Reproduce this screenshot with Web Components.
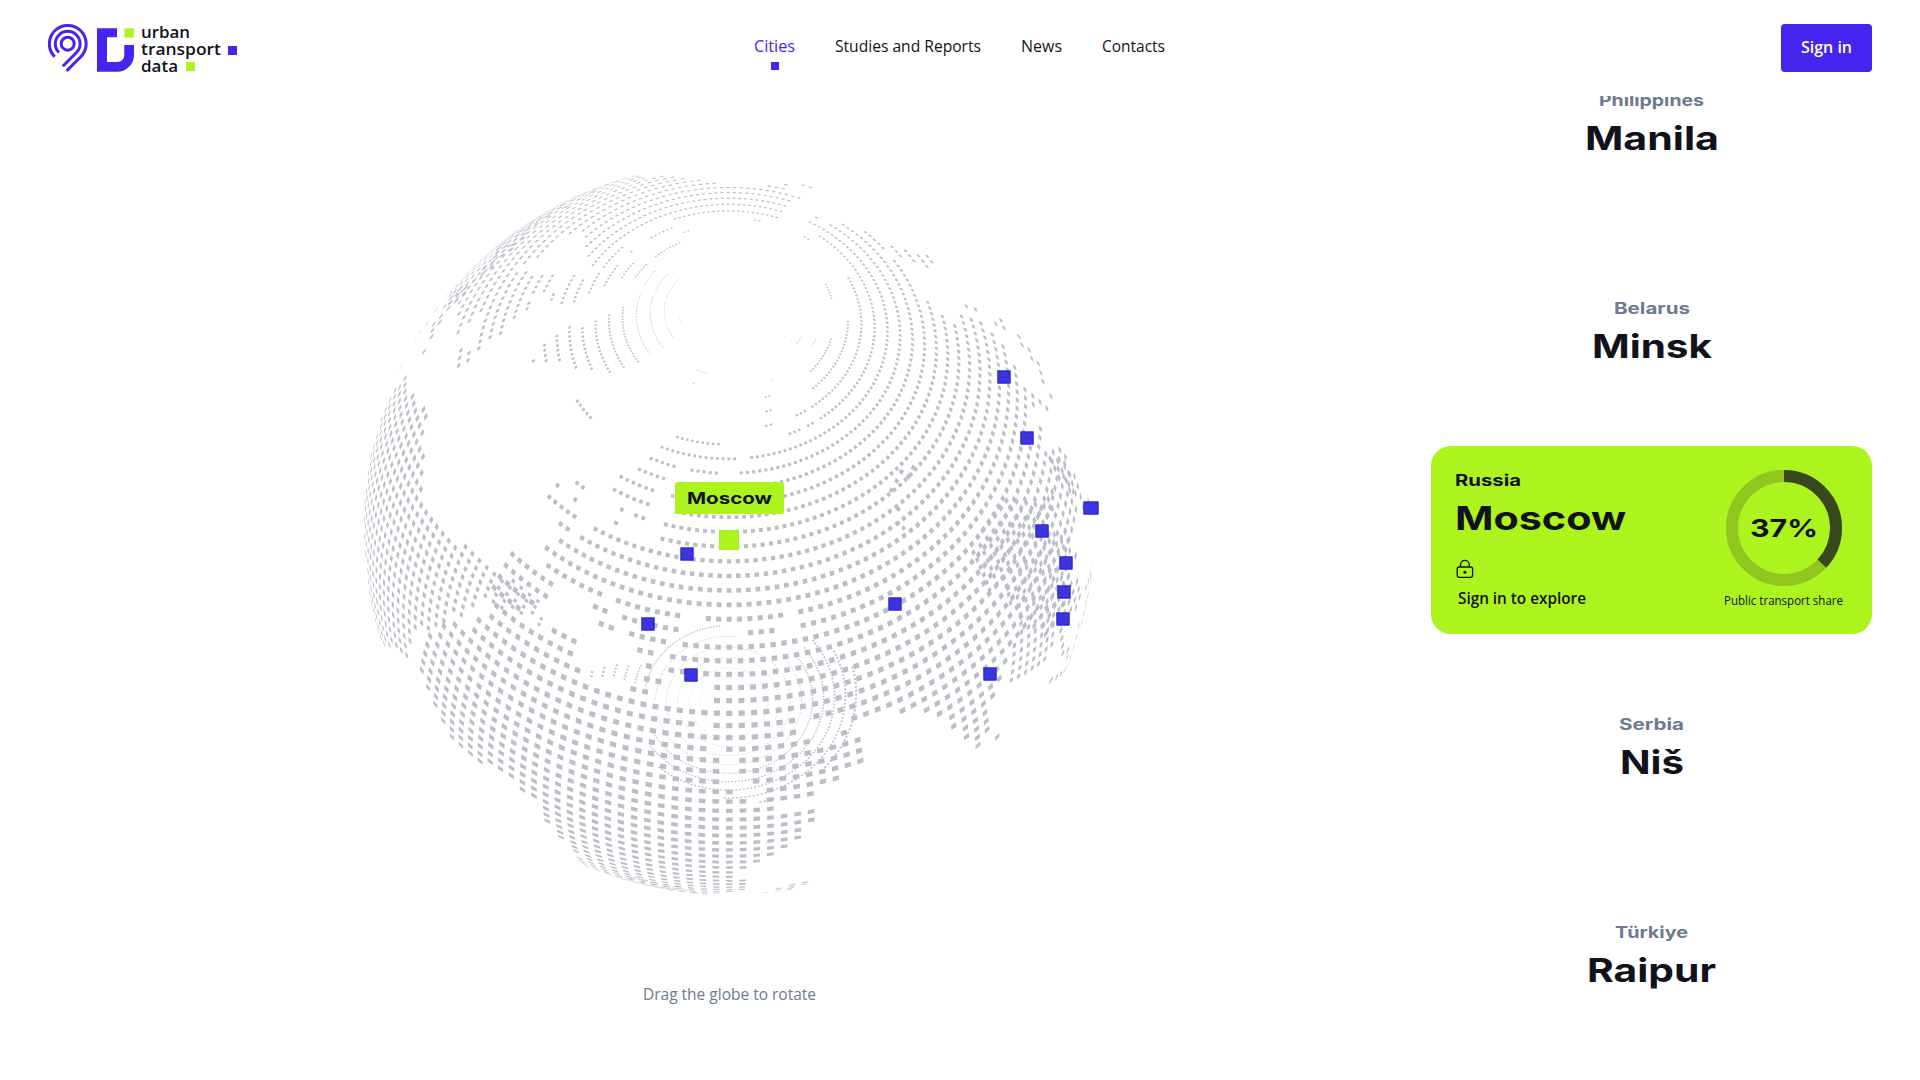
<!DOCTYPE html>
<html lang="en">
<head>
<meta charset="utf-8">
<title>Urban Transport Data</title>
<style>
html,body{margin:0;height:100%;background:#fff;overflow:hidden}
body{font-family:"Open Sans","Noto Sans",sans-serif;color:#12121c}
</style>
</head>
<body>
<utd-app></utd-app>
<script>
const define = (name, html, setup) => {
  const tpl = document.createElement('template');
  tpl.innerHTML = html;
  customElements.define(name, class extends HTMLElement {
    connectedCallback() {
      if (this.shadowRoot) return;
      this.attachShadow({mode: 'open'}).append(tpl.content.cloneNode(true));
      if (setup) setup.call(this, this.shadowRoot);
    }
  });
};

/* One line of text stretched to a set width. */
define('fit-text', `<style>
:host{display:inline-block;white-space:nowrap;text-align:left}
span{display:inline-block;transform-origin:0 50%}
:host([wide]){font-family:Inter,"Liberation Sans",sans-serif;font-weight:650}
</style><span></span>`, function (root) {
  const s = root.querySelector('span');
  s.textContent = this.getAttribute('text');
  const w = +this.getAttribute('w');
  const natural = s.getBoundingClientRect().width;
  this.style.width = w + 'px';
  s.style.transform = 'scaleX(' + (w / natural) + ')';
});

define('utd-logo', `<style>
:host{display:flex;align-items:flex-start;height:48px;width:190px}
svg{width:94px;height:50px;flex:none;display:block}
.words{display:flex;flex-direction:column;font-size:17px;font-weight:600;line-height:17px;margin:-1px 0 0 -1px}
.row{display:flex;height:17px;align-items:flex-start}
i{width:9px;height:9px;flex:none}
</style>
<svg viewBox="0 0 94 50">
<g fill="none" stroke="#4524f0" stroke-width="3">
<circle cx="19.7" cy="19.7" r="6.5"/>
<path d="M10.9 28.5A12.4 12.4 0 1 1 28.5 28.5L14.8 42.2"/>
<path d="M6.7 32.8A18.4 18.4 0 1 1 32.8 32.8L18.7 46.9"/></g>
<path fill="#4524f0" d="M49 4.3H69V13.3H59V38H69.3A7 7 0 0 0 76.3 31V21H86V31A16.7 16.7 0 0 1 69.3 47.7H49Z"/>
<path fill="#adf41f" d="M76.4 4.3H85.8V13.6H76.4Z"/>
</svg>
<div class="words">
<div class="row"><fit-text text="urban" w="49"></fit-text></div>
<div class="row"><fit-text text="transport" w="80"></fit-text><i style="background:#4524f0;margin:6px 0 0 6.5px"></i></div>
<div class="row"><fit-text text="data" w="37"></fit-text><i style="background:#adf41f;margin:5px 0 0 8px"></i></div>
</div>`);

define('nav-item', `<style>
:host{display:flex;flex-direction:column;align-items:center;font-size:16px;line-height:24px;height:36px}
i{width:8px;height:8px;margin-top:4px;background:transparent}
:host([active]){color:#4524f0}
:host([active]) i{background:#4524f0}
</style><slot></slot><i></i>`);

define('sign-button', `<style>
:host{display:flex;align-items:flex-start;justify-content:center;box-sizing:border-box;width:91px;height:48px;padding-top:12px;border-radius:4px;background:#4524f0;color:#fff;font-size:16px;line-height:22px;font-weight:600}
</style><slot></slot>`);

define('utd-header', `<style>
:host{display:flex;justify-content:space-between;align-items:flex-start;box-sizing:border-box;height:96px;padding:24px 48px 0;background:#fff}
.left,.right{flex:1;display:flex}.right{justify-content:flex-end}
nav{display:flex;gap:40px;padding:10px 1px 0 0}
</style>
<div class="left"><utd-logo></utd-logo></div>
<nav>
<nav-item active><fit-text text="Cities" w="41"></fit-text></nav-item>
<nav-item><fit-text text="Studies and Reports" w="146"></fit-text></nav-item>
<nav-item><fit-text text="News" w="41"></fit-text></nav-item>
<nav-item><fit-text text="Contacts" w="63"></fit-text></nav-item>
</nav>
<div class="right"><sign-button><fit-text text="Sign in" w="51"></fit-text></sign-button></div>`);

/* Coastlines as flat lon,lat lists. */
const LAND = `
-17,15 -16.5,19.5 -17,21 -16,23.5 -13,27.5 -10,29 -9.8,31.5 -7,33.5 -6,35.8 -2,35 3,36.9 10,37.3 11,36.8 10.2,34.3 15,32.3 19.3,30.9 20,33.2 24,33.2 25,31.6 29,31.2 32.3,31.2 34.2,31.3 33,28.5 35.5,24 37.2,21 37.2,19 39.5,15.5 43,12.5 43.2,11.5 51.2,11.8 50.8,9.5 48,4.5 43.5,0.5 41.5,-2 39,-5 39.5,-7.5 40.6,-10.5 40.7,-15 37,-17.7 35,-20 35.5,-24 32.7,-26 32.4,-28.8 28,-33 25.6,-34 20,-34.8 18.3,-34 18.2,-31.8 15.2,-27 14.5,-22.5 11.8,-17.5 13.7,-11 12.2,-6 9,-1 9.7,3.8 8.5,4.5 6,4.3 4.4,6.3 1,5.9 -2,4.8 -7.5,4.4 -11.5,7 -13.3,9.2 -15,11 -16.7,12.4 -17.5,14.7
44,-17 47,-15.2 49.3,-12 50.3,-15.8 47.5,-24.8 45,-25.5 43.3,-22.5
22,34.5 26,34.5 26,35.5 22,35.5
-9,37 -9.5,38.8 -8.8,41 -9.2,43.2 -1.8,43.4 -1.2,46 -4.6,48.3 -1.5,48.7 -1.5,49.7 0.2,49.7 1.6,50.9 4,52 5,53.3 8.2,53.8 8.1,57 10.6,57.7 10.5,56 9.8,54.8 11,54 14,54 16,54.4 19,54.4 21,55.3 21.2,57.5 24.3,57.3 23.5,59 28,59.6 30,60 28,60.6 22.9,59.9 21.3,61 21.4,62.8 25.3,65 22.2,65.8 21,64.5 17.5,62 17.2,60.7 18.8,60 16.5,58.5 16,56.3 14.2,55.5 12.9,55.5 11,59 9,58.3 7,58 5.3,59 5,61.8 9,63.5 12,65.5 14.5,68 19,69.8 25,71 31,70.2 30,69.5 33,69.3 41,67.5 40,66.3 34,66.7 33,66.5 35,64.3 37.5,63.9 40,64.7 40.3,65.8 44,66 44,68.3 46.5,68 46,66.9 53,68.6 60,68.7 61,69.8 65,69.2 68.5,68.4 66.8,70.8 68.3,72.6 72.5,73 72,71 73,68 74.5,68.5 73.8,71 75,72.5 80.5,72.5 80.5,73.5 87,75 95,76 104,77.7 113,76 113.5,73.7 119,73 127,73.4 129,71 133,71.6 140,72.6 150,71.5 160,69.7 170,69.8 176,69.8 180,68.9 190,66.2 186,64.5 182,65.5 178.5,62.5 170,60 166,60 163,58 162.5,56 160,53 156.8,51 155.7,55 156,57.5 163,61.5 164,62.5 160,61.5 155,59.4 148,59.4 142,59 135.5,54.7 139,54 141.3,53 140.3,48.5 135.5,44 131,42.8 127.6,39.8 129.4,37 129.2,35.3 126.4,34.5 126.8,37 125,38.5 124.5,39.8 121.3,38.9 121.5,40.7 118,39 119,37.3 122.3,37.2 120,36 119.5,34.7 121.8,31.5 121.8,29 119.5,25.5 116.8,23.2 113,22 110,21.3 108.5,21.7 105.8,19.5 108.8,15.5 109.2,12 107,10.4 104.8,8.7 105,10.3 102.5,12.2 100.9,12.8 99.3,10 100.5,7.2 103,5.3 103.8,1.4 101.3,2.8 100.3,6 98.3,8.2 98.7,11.7 97.6,16.5 95.3,15.8 94.3,18.5 91.8,22.4 88.5,21.7 86.8,20.3 82.3,16.6 80.2,15 80.2,12 79.8,10.3 77.6,8.1 76.3,10 74.8,13.5 73,17 72.8,21 70.3,20.8 69,22.3 67,24.8 61.5,25.2 57.3,25.8 56.5,27 51.5,27.8 50,30.1 48,30 48.5,28 50.2,26.5 51.5,25.8 51.5,24.2 54.2,24.2 56.3,26 57,24 59.8,22.5 57.8,19 55.2,17.5 52,15.6 45,12.8 43.3,12.7 42.7,16.5 39.2,21 37,25 34.8,28 35,29.5 34.2,31.3 35,33 36,36.7 32.5,36.1 30.6,36.8 27.5,36.8 26.3,39 27,40.5 29,41.1 31.5,41.3 35,42 38,41 41.5,41.5 39,44 37.2,45.3 39.2,47 35,46.3 36.5,45.2 33.7,44.4 32.6,45.5 33,46.2 30.8,46.5 28.8,44.8 27.7,42.5 28.8,41.2 26.2,40.8 25,40.3 25,38 23.5,36.5 21.3,38 19.5,40.3 19.4,42 15.5,43.8 13.8,45 12.3,45.4 12.5,44 16,41.6 18.4,40 16.8,40.5 16.5,38.5 15.7,38 16,39.5 12.3,41.7 10.3,43.7 8.5,44.4 4.8,43.4 3.1,43 3.1,41.8 -0.2,39.5 0.1,38.7 -2.2,36.7 -5.6,36.1 -6.4,36.9
-5.5,50 1.3,51.3 1.7,52.7 0,53.5 -1.6,55.5 -2,57.6 -5,58.6 -5.5,56 -3,54.5 -4.5,53 -5,51.7 -3,51.4
-10,51.7 -6.3,52.2 -6,54.5 -8,55.3 -10,54
-22.5,64 -18.5,63.4 -14,64.8 -16,66.5 -20,65.5 -22.5,66.3
11,79.5 16,76.7 18,78 27,80.2 20,80.6
52,71 57,70.7 60,75 68.5,76.8 66,77.2 55,74.5
92,80 100,78 106,78.6 98,81.4
138,74 150,74.6 150,76 138,76
178,70.6 183,70.8 183,71.7 178,71.7
-44,60 -51,64 -54,67.5 -51,70 -55,72 -60,76 -71,77.3 -66,80 -60,82 -35,83.5 -20,82 -18,79 -20,75 -23,71.5 -30,68.2 -38,65.7
130,31.5 131,34.3 136,35.8 140,40 141.5,41.3 142,39.5 140.8,36 137,34.6 132,33
140,42 141.5,45.3 145.3,43.5 143,42
142,46 142,54 143.3,53 144.5,49 143,47
120,23 121.5,25.3 121,22
108.7,19 111,20 110,18.3
120,16 121,18.5 122.2,18 121.8,14 124,13 123,12.8 120.5,14
122,7 125.5,9.8 126.4,7.5 125.5,5.8
122,10 123,12 125,12.5 125,10
109,1.5 113,3.2 117,7 119,5 117.8,1 116,-4 110.2,-2.9
95.3,5.5 98,4.5 103.5,-1 106,-5.8 104.5,-5.8 100.5,-1.5
105.5,-6.3 114.3,-7 114.5,-8.7 106,-7.5
119,-5.5 121,-5 120.5,-2 124,1 120,1
131,-0.8 135,-3.3 138,-1.6 145,-4.5 150.5,-10.5 147,-9.8 143,-9.2 138,-8.3 138,-5.5 133,-4
114,-22 113.7,-26 115.7,-32 115,-34.3 118,-35 124,-33 131,-31.5 135.5,-34.8 138,-33 140,-38 146.5,-39 150,-37.5 153.5,-29 153,-25.5 149,-21 146,-19 145.3,-15 142.5,-10.8 141.5,-14 140.5,-17.6 136,-15 136.8,-12.2 132.5,-11.5 129.5,-15 126,-14 122.3,-18
145,-41 148,-41 147,-43.5
173,-34.5 178.5,-37.7 176,-41.5 174,-39
172.7,-40.7 174,-41.8 170.5,-46 166.5,-46
80,9.5 81.8,7 80.3,6
-168,65.8 -162,66.3 -166,68.4 -156.5,71.3 -141,69.7 -128,70.3 -115,68.2 -108,68 -96,68 -94,71.8 -90,69 -82,69.5 -81.5,67 -87,64.5 -94,61 -94.5,58.8 -92.5,57 -82.5,55.2 -82,53 -79,51.3 -79.5,54.8 -77,57 -78,62.3 -73.5,62.3 -69.5,61 -70,58.9 -67.5,58.3 -64.5,60.2 -61.5,56.5 -57,54.5 -56,51.8 -60,50.2 -66,50.2 -70,47.2 -65,49 -64.5,46.5 -61,45.7 -66,43.5 -67,44.8 -70,43.5 -70.5,41.8 -74,40.5 -76,37 -75.8,35.2 -81,31.7 -80.1,26.5 -81,25.2 -82.7,28 -84,30 -89.5,30 -94,29.5 -97.3,27.5 -97.5,22.5 -95.5,18.7 -91,18.6 -90.3,21 -87,21.4 -88.3,16 -83.2,15 -83.7,11 -81,8.8 -77.5,8.7 -80,7.4 -85.7,10.5 -87.5,13 -92,14.5 -96,15.8 -105.5,20.4 -105.5,22.5 -112.5,29.5 -114.7,31.5 -111,25.5 -110,23 -115,28 -117,32.5 -120.6,34.6 -124.2,40 -124,46 -123,49 -128,51 -133,56 -140,59.8 -147,61 -152,59.3 -158,56.2 -166,53.6 -168,52.8 -168,54 -160,56.4 -158,58.6 -162,59.5 -166,62 -161,64.5
-59,46.6 -57,49 -57,51.6 -55,51.6 -52.6,46.6
-62,66 -68,69.5 -79,73.5 -89,73.5 -85,70 -74,68 -78,64.5 -66,62.2
-117,69.5 -105,69 -105,73 -117,73
-90,76.5 -78,76.3 -62,82.5 -75,83 -92,81
-92,74.8 -80,74.8 -80,75.7 -92,76.5
-125,71.5 -117,73.5 -121,74.4
-115,75 -98,75 -98,76.5 -115,76.5
-84,22 -82,23.2 -75,20.7 -77,20
-74,18.5 -73,19.8 -69,18.8
-77.5,8.7 -72,12 -62,10.7 -57,6 -51,4.2 -50,0 -44,-2.7 -39,-3 -35,-5.5 -35,-9 -39,-14 -39.5,-20 -41.5,-22.5 -48,-25.5 -49,-29 -53.5,-34 -58,-34 -57,-37 -62,-39 -65,-41 -65,-45 -67.5,-46.5 -66,-48 -69,-51 -68.5,-52.5 -65.5,-54.7 -70,-55 -74.5,-51 -75.5,-47 -73.5,-41.5 -73.5,-37 -71.5,-30 -70.3,-18.5 -76,-14.5 -81.2,-6 -80,-3 -80,0.8 -77.5,4 -78,8
-180,-78 -150,-77 -135,-74.5 -100,-73 -75,-73 -68,-68 -60,-64 -57,-63.5 -61,-70 -62,-75 -45,-78 -30,-76 -15,-72.5 0,-70.5 30,-69.5 55,-66.5 70,-68.5 90,-66.5 110,-66 135,-66.2 150,-68.5 165,-71 165,-78 180,-78 180,-90 -180,-90
47.7,43 48,45.5 49,46.4 51,46.2 51,44.5 50,42.5`.trim().split('\n').map(l => l.trim().split(' ').map(p => p.split(',').map(Number)));

/* Even-odd test over every ring; a ring inside another is a lake. */
const isLand = (lon, lat) => {
  let inside = false;
  for (const ring of LAND) {
    for (let i = 0, j = ring.length - 1; i < ring.length; j = i++) {
      const [xi, yi] = ring[i], [xj, yj] = ring[j];
      if ((yi > lat) !== (yj > lat) && lon < (xj - xi) * (lat - yi) / (yj - yi) + xi) inside = !inside;
    }
  }
  return inside;
};

define('dot-globe', `<style>
:host{display:block;position:relative;flex:none;width:1431px;height:984px}
canvas{display:block}
b{position:absolute;width:13px;height:13px;box-sizing:border-box;background:#3a35dd;border:1px solid #2a22dc;transform:translate(-50%,-50%)}
.pin{position:absolute;left:719px;top:434px;width:20px;height:20px;background:#adf41f}
.tip{position:absolute;left:675px;top:386px;width:109px;height:32px;border-radius:3px;background:#adf41f;display:flex;align-items:center;justify-content:center;font-size:16px;line-height:20px}
.hint{position:absolute;left:0;width:1458px;top:886px;text-align:center;color:#6e7a8f;font-size:16px;line-height:24px}
</style>
<canvas width="1431" height="860"></canvas>
<div class="pin"></div><div class="tip"><fit-text wide text="Moscow" w="85"></fit-text></div>
<div class="hint"><fit-text text="Drag the globe to rotate" w="173"></fit-text></div>`, function (root) {
  const g = root.querySelector('canvas').getContext('2d');
  const R = Math.PI / 180, CX = 728.5, CY = 433, F = 2572, D = 7.1;
  const s0 = Math.sin(57.4 * R), c0 = Math.cos(57.4 * R);
  g.fillStyle = '#bbbec7';
  for (let lat = -89; lat < 90; lat += 2) {
    const s = Math.sin(lat * R), c = Math.cos(lat * R);
    const h = 0.49 * R * c * (Math.abs(lat) > 76 ? 0.75 : 1);
    for (let k = 0; k < 180; k++) {
      let lon = 37.7 + k * 2;
      if (lon > 180) lon -= 360;
      if (!isLand(lon, lat) && !(lon < -168 && isLand(lon + 360, lat))) continue;
      const a = k * 2 * R + 0.12 * R, sd = Math.sin(a), cd = Math.cos(a);
      const P = [c * sd, c0 * s - s0 * c * cd, s0 * s + c0 * c * cd];
      const E = [cd, s0 * sd, -c0 * sd];
      const N = [-s * sd, c0 * c + s0 * s * cd, s0 * c - c0 * s * cd];
      g.beginPath();
      for (const [u, v] of [[-h, -h], [h, -h], [h, h], [-h, h]]) {
        const m = F / (D - P[2] - u * E[2] - v * N[2]);
        g.lineTo(CX + m * (P[0] + u * E[0] + v * N[0]), CY - m * (P[1] + u * E[1] + v * N[1]));
      }
      g.fill();
    }
  }
  const pin = root.querySelector('.pin');
  for (const [x, y, w] of [[1003.5,376.5],[1026.5,438],[1090.5,508,15],[1041.5,531],[1066,563],[1064,592],[1063,619],[894.5,604],[989.5,674],[648,624],[691,675],[687,554]]) {
    const b = document.createElement('b');
    b.style.left = x + 'px';
    b.style.top = (y - 96) + 'px';
    if (w) b.style.width = w + 'px';
    root.insertBefore(b, pin);
  }
});

define('city-item', `<style>
:host{display:flex;flex-direction:column;align-items:center;justify-content:center;height:188px;flex:none}
.c{color:#6e7a8f;font-size:16px;line-height:20px;height:20px;margin-top:-1px}
.n{font-size:33px;line-height:40px;height:40px;margin-top:8px}
</style><div class="c"><slot name="country"></slot></div><div class="n"><slot name="city"></slot></div>`);

define('share-ring', `<style>
:host{display:grid;place-items:center;width:116px;height:116px}
svg,div{grid-area:1/1}div{font-size:24.5px;line-height:30px}
</style>
<svg width="116" height="116" viewBox="0 0 116 116" fill="none" stroke-width="12">
<circle cx="58" cy="58" r="52" stroke="#91c61f"/>
<circle cx="58" cy="58" r="52" stroke="#37481b" pathLength="100" stroke-dasharray="37 63" transform="rotate(-90 58 58)"/></svg>
<div><slot></slot></div>`);

define('city-card', `<style>
:host{display:flex;justify-content:space-between;box-sizing:border-box;height:188px;flex:none;border-radius:20px;background:#adf41f;padding:24px 29px 0 24px}
.l{display:flex;flex-direction:column;align-items:flex-start}
.country{font-size:16px;line-height:20px;height:20px}
.city{font-size:33px;line-height:40px;height:40px;margin-top:8px}
svg{display:block;margin:21px 0 0 1px}
.go{font-size:16px;font-weight:600;line-height:22px;margin:8px 0 0 3px}
.r{display:flex;flex-direction:column;align-items:center}
.cap{font-size:12px;line-height:16px;margin-top:7px}
</style>
<div class="l"><div class="country"><fit-text wide text="Russia" w="66"></fit-text></div>
<div class="city"><fit-text wide text="Moscow" w="171"></fit-text></div>
<svg width="18" height="20" viewBox="0 0 18 20" fill="none" stroke="#12121c" stroke-width="1.3"><rect x="1.2" y="8" width="15.4" height="10.3" rx="2"/><path d="M4.5 8V5.8A4.4 4.4 0 0 1 13.3 5.8V8"/><circle cx="8.9" cy="13.2" r="1.5" fill="#12121c" stroke="none"/></svg>
<div class="go"><fit-text text="Sign in to explore" w="128"></fit-text></div></div>
<div class="r"><share-ring><fit-text wide text="37%" w="68"></fit-text></share-ring>
<div class="cap"><fit-text text="Public transport share" w="119"></fit-text></div></div>`);

define('city-list', `<style>
:host{display:flex;flex-direction:column;gap:20px;flex:none;width:441px;margin-top:-66px}
</style><slot></slot>`);

define('utd-app', `<style>
:host{display:flex;flex-direction:column;width:1920px;height:1080px;overflow:hidden}
main{display:flex;height:984px;overflow:hidden}
</style>
<utd-header></utd-header>
<main><dot-globe></dot-globe>
<city-list>
<city-item><fit-text wide slot="country" text="Philippines" w="105"></fit-text><fit-text wide slot="city" text="Manila" w="134"></fit-text></city-item>
<city-item><fit-text wide slot="country" text="Belarus" w="76"></fit-text><fit-text wide slot="city" text="Minsk" w="120"></fit-text></city-item>
<city-card></city-card>
<city-item><fit-text wide slot="country" text="Serbia" w="65"></fit-text><fit-text wide slot="city" text="Niš" w="64"></fit-text></city-item>
<city-item><fit-text wide slot="country" text="Türkiye" w="73"></fit-text><fit-text wide slot="city" text="Raipur" w="129"></fit-text></city-item>
</city-list></main>`);
</script>
</body>
</html>
